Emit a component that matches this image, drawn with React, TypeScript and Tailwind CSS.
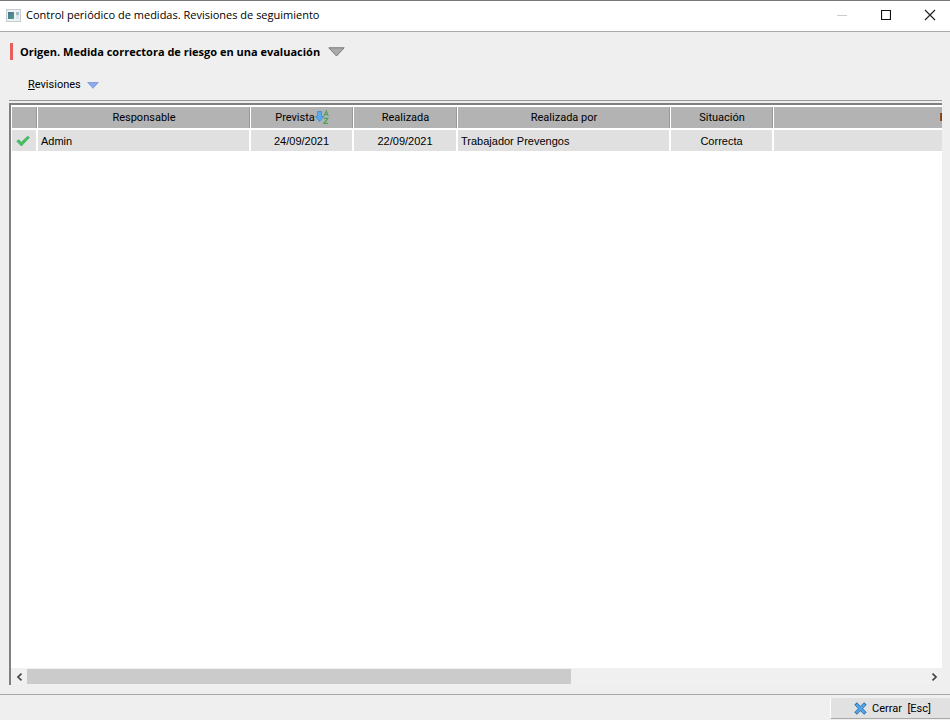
import type { ReactNode } from "react";

const columns = [
  { title: "", width: "w-[26px]" },
  { title: "Responsable", width: "w-[213px]" },
  { title: "Prevista", width: "w-[103px]", sorted: true },
  { title: "Realizada", width: "w-[104px]" },
  { title: "Realizada por", width: "w-[213px]" },
  { title: "Situación", width: "w-[103px]" },
  { title: "I", width: "w-[335px]" },
];

const reviews = [
  {
    responsable: "Admin",
    prevista: "24/09/2021",
    realizada: "22/09/2021",
    realizadaPor: "Trabajador Prevengos",
    situacion: "Correcta",
  },
];

function WindowIcon() {
  return (
    <svg width="15" height="13" viewBox="0 0 15 13" aria-hidden="true">
      <defs>
        <linearGradient id="pane" x1="0" y1="0" x2="1" y2="1">
          <stop offset="0" stopColor="#4a7194" />
          <stop offset="1" stopColor="#48a387" />
        </linearGradient>
      </defs>
      <rect x="0.5" y="0.5" width="14" height="12" fill="#eef1f2" stroke="#c6ccd0" />
      <rect x="2" y="3" width="6" height="7" fill="url(#pane)" />
      <rect x="10" y="3" width="3" height="3" fill="#a9bdc9" />
      <rect x="10" y="6" width="3" height="4" fill="#dde4e7" />
    </svg>
  );
}

function SortIcon() {
  return (
    <svg width="14" height="15" viewBox="0 0 14 15" aria-hidden="true">
      <path d="M2.5 1.5h4v5h2.2L4.5 11.5 .3 6.5h2.2z" fill="#5aaaf0" stroke="#3f86d6" strokeWidth="0.8" />
      <path d="M9 6 11.3 1l1.9 5M9.8 4.5h2.8" fill="none" stroke="#4aa457" strokeWidth="1.1" />
      <path d="M8.8 8.3h4L9 13.3h4.2" fill="none" stroke="#4aa457" strokeWidth="1.3" />
    </svg>
  );
}

function CheckIcon() {
  return (
    <svg width="14" height="12" viewBox="0 0 14 12" role="img" aria-label="Revisada">
      <path d="M.8 6.2 2.8 4.8 5.3 7.2 11.8 1.2 13.3 2.6 5.4 11z" fill="#43c463" stroke="#36a653" strokeWidth="0.7" />
    </svg>
  );
}

function CloseIcon() {
  return (
    <svg width="13" height="13" viewBox="0 0 13 13" aria-hidden="true">
      <path d="M1.6 1.6 11.4 11.4M11.4 1.6 1.6 11.4" stroke="#2b6fae" strokeWidth="3.6" />
      <path d="M2.2 2.2 10.8 10.8M10.8 2.2 2.2 10.8" stroke="#55a5e6" strokeWidth="2.4" />
    </svg>
  );
}

function Cell({ children, center }: { children?: ReactNode; center?: boolean }) {
  return (
    <td className={`h-[23px] border-r-2 border-b-2 border-white bg-[#e0e0e0] p-0 ${center ? "text-center" : "pl-[3px]"}`}>
      {children}
    </td>
  );
}

export default function App() {
  return (
    <main className="flex min-h-screen flex-col bg-[#efefef] font-[Roboto,Arial,sans-serif] text-[11px] leading-4 text-black">
      {/* Title bar */}
      <header className="flex h-8 items-center justify-between border-t border-b border-t-[#777] border-b-[#aaa] bg-white pb-[2px] pl-[6px]">
        <div className="flex items-center gap-[5px]">
          <WindowIcon />
          <h1 className="font-['Open_Sans','Noto_Sans',sans-serif] text-[11px]">
            Control periódico de medidas. Revisiones de seguimiento
          </h1>
        </div>
        <div className="flex">
          <button type="button" aria-label="Minimizar" className="flex h-7 w-11 items-center justify-center">
            <svg width="10" height="10" viewBox="0 0 10 10">
              <path d="M0 5.5h10" stroke="#ccc" />
            </svg>
          </button>
          <button type="button" aria-label="Maximizar" className="flex h-7 w-11 items-center justify-center">
            <svg width="10" height="10" viewBox="0 0 10 10">
              <path d="M.5 .5h9v9h-9z" fill="none" stroke="#111" strokeWidth="1.2" />
            </svg>
          </button>
          <button type="button" aria-label="Cerrar ventana" className="flex h-7 w-[42px] items-center justify-center pl-[2px]">
            <svg width="12" height="12" viewBox="0 0 12 12">
              <path d="M1 1l10 10M11 1 1 11" stroke="#222" strokeWidth="1.2" />
            </svg>
          </button>
        </div>
      </header>

      <section className="flex grow flex-col pt-[11px] pr-2 pb-[9px] pl-[9px]">
        {/* Origin of the measure */}
        <div className="flex h-[17px] items-center pl-px">
          <span className="h-[17px] w-[3px] bg-[#e85d5d]" />
          <button type="button" className="flex items-center gap-2 pl-[7px] font-['Open_Sans',Arial,sans-serif] font-bold">
            Origen. Medida correctora de riesgo en una evaluación
            <svg width="17" height="10" viewBox="0 0 17 10" aria-hidden="true">
              <path d="M.8 .8h15.4L8.5 9z" fill="#aaa" stroke="#777" />
            </svg>
          </button>
        </div>

        <div className="mt-[17px] flex pl-[19px]">
          <button type="button" className="flex items-center gap-[6px]">
            <span>
              <u>R</u>evisiones
            </span>
            <svg width="12" height="7" viewBox="0 0 12 7" aria-hidden="true">
              <path d="M.7 .5h10.6L6 6.3z" fill="#8caaf0" stroke="#7390d8" strokeWidth="0.7" />
            </svg>
          </button>
        </div>

        <hr className="mt-[7px] border-[#999]" />

        {/* Reviews grid */}
        <div className="mt-[2px] flex grow flex-col border-t-2 border-l-2 border-[#808080] bg-white">
          <div className="grow overflow-hidden pt-[2px] pl-px">
            <div className="w-0">
              <table className="w-[1097px] table-fixed border-separate border-spacing-0">
                <thead>
                  <tr>
                    {columns.map((col) => (
                      <th
                        key={col.title}
                        className={`${col.width} h-[23px] border-r border-b-2 border-white bg-[#b3b3b3] p-0 font-normal shadow-[inset_-1px_0_0_#999]`}
                      >
                        <div className="flex h-4 items-center justify-center">
                          {col.title}
                          {col.sorted && <SortIcon />}
                        </div>
                      </th>
                    ))}
                  </tr>
                </thead>
                <tbody className="font-['Liberation_Sans',Arial,sans-serif]">
                  {reviews.map((review) => (
                    <tr key={review.prevista}>
                      <Cell>
                        <div className="flex pl-px">
                          <CheckIcon />
                        </div>
                      </Cell>
                      <Cell>{review.responsable}</Cell>
                      <Cell center>{review.prevista}</Cell>
                      <Cell center>{review.realizada}</Cell>
                      <Cell>{review.realizadaPor}</Cell>
                      <Cell center>{review.situacion}</Cell>
                      <Cell />
                    </tr>
                  ))}
                </tbody>
              </table>
            </div>
          </div>

          {/* Horizontal scroll bar */}
          <div className="flex h-[17px] items-center bg-[#f0f0f0]">
            <button type="button" aria-label="Desplazar a la izquierda" className="flex h-4 w-4 items-center justify-center">
              <svg width="7" height="8" viewBox="0 0 7 8">
                <path d="M5.5 .7 2 4l3.5 3.3" fill="none" stroke="#444" strokeWidth="1.7" />
              </svg>
            </button>
            <div className="h-[15px] grow">
              <div className="h-[15px] w-[60.5%] bg-[#cbcbcb]" />
            </div>
            <button type="button" aria-label="Desplazar a la derecha" className="flex h-4 w-4 items-center justify-center">
              <svg width="7" height="8" viewBox="0 0 7 8">
                <path d="M1.5 .7 5 4 1.5 7.3" fill="none" stroke="#444" strokeWidth="1.7" />
              </svg>
            </button>
          </div>
        </div>
      </section>

      <footer className="flex h-[26px] items-start justify-end border-t border-[#aaa] pt-[3px]">
        <button
          type="button"
          className="flex h-[21px] w-[120px] items-center gap-[5px] border-b border-l border-b-[#aaa] border-l-white bg-[#e1e1e1] pt-px pl-[23px]"
        >
          <CloseIcon />
          Cerrar&nbsp; [Esc]
        </button>
      </footer>
    </main>
  );
}
